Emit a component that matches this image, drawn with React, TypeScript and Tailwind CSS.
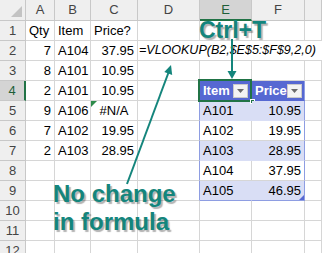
import React from 'react';

const grid = 'border-r border-b border-[#d6d6d6]';
const head = 'border-r border-b border-[#c8c8c8] bg-[#efefef] text-[#444] flex items-center justify-center';

type Row = { n: number; a?: string; b?: string; c?: string; e?: string; f?: string; band?: boolean };

const rows: Row[] = [
  { n: 1, a: 'Qty', b: 'Item', c: 'Price?' },
  { n: 2, a: '7', b: 'A104', c: '37.95' },
  { n: 3, a: '8', b: 'A101', c: '10.95' },
  { n: 4, a: '2', b: 'A101', c: '10.95' },
  { n: 5, a: '9', b: 'A106', c: '#N/A', e: 'A101', f: '10.95', band: true },
  { n: 6, a: '7', b: 'A102', c: '19.95', e: 'A102', f: '19.95' },
  { n: 7, a: '2', b: 'A103', c: '28.95', e: 'A103', f: '28.95', band: true },
  { n: 8, e: 'A104', f: '37.95' },
  { n: 9, e: 'A105', f: '46.95', band: true },
  { n: 10 },
  { n: 11 },
  { n: 12 },
];

const DropBtn = () => (
  <span className="w-[15px] h-[14px] bg-[#f3f3f3] border border-[#c9c9c9] flex items-center justify-center">
    <svg width="7" height="4" viewBox="0 0 7 4">
      <polygon points="0,0 7,0 3.5,4" fill="#6b6b6b" />
    </svg>
  </span>
);

const Cell = ({ children, right, className = '' }: { children?: React.ReactNode; right?: boolean; className?: string }) => (
  <div className={`${grid} flex items-center ${right ? 'justify-end pr-[3px]' : 'pl-[3px]'} ${className}`}>
    {children}
  </div>
);

export default function App() {
  return (
    <div className="relative w-[322px] h-[253px] overflow-hidden bg-white text-black text-[13px] font-['Liberation_Sans',Arial,sans-serif]">
      <div className="grid grid-cols-[26px_29px_36px_47px_62px_52px_53px_17px] grid-rows-[21px_repeat(12,20px)]">
        {/* column headers */}
        <div className={`${head} relative`}>
          <svg className="absolute right-[3px] bottom-[3px]" width="11" height="11" viewBox="0 0 11 11">
            <polygon points="11,0 11,11 0,11" fill="#c3c3c3" />
          </svg>
        </div>
        <div className={head}>A</div>
        <div className={head}>B</div>
        <div className={head}>C</div>
        <div className={head}>D</div>
        <div className={`${head} !bg-[#d4d4d4] !text-[#1e5e38] border-b-2 !border-b-[#217346]`}>E</div>
        <div className={head}>F</div>
        <div className={head}></div>

        {rows.map((r) => {
          const inTable = r.n >= 4 && r.n <= 9;
          const bandBg = r.band ? 'bg-[#d9def5]' : '';
          return (
            <React.Fragment key={r.n}>
              <div
                className={`${head} ${r.n === 4 ? '!bg-[#d4d4d4] !text-[#1e5e38] border-r-2 !border-r-[#217346]' : ''}`}
              >
                {r.n}
              </div>
              <Cell right={r.n !== 1}>{r.a}</Cell>
              <Cell>{r.b}</Cell>
              {r.c === '#N/A' ? (
                <div className={`${grid} relative flex items-center justify-center`}>
                  <svg className="absolute left-0 top-0" width="6" height="6" viewBox="0 0 6 6">
                    <polygon points="0,0 6,0 0,6" fill="#2e8b4a" />
                  </svg>
                  #N/A
                </div>
              ) : (
                <Cell right={r.n !== 1}>{r.c}</Cell>
              )}
              {r.n === 2 ? (
                <div className="col-span-4 border-b border-[#d6d6d6] flex items-center pl-[1px] italic text-[12.5px] whitespace-nowrap">
                  =VLOOKUP(B2,$E$5:$F$9,2,0)
                </div>
              ) : (
                <>
                  <Cell className={inTable ? '!border-r-[#8e9de2]' : ''} />
                  {r.n === 4 ? (
                    <>
                      <div className="relative bg-[#5668d2] border-r border-white border-b border-b-[#5668d2] flex items-center justify-between pl-[3px] pr-[3px] text-white font-bold">
                        Item
                        <DropBtn />
                        <div className="absolute -left-[2px] -top-[2px] w-[54px] h-[23px] border-2 border-[#217346] pointer-events-none" />
                        <div className="absolute -right-[4px] -bottom-[4px] w-[5px] h-[5px] bg-[#217346] border border-white" />
                      </div>
                      <div className="bg-[#5668d2] border-r border-[#8e9de2] border-b border-b-[#5668d2] flex items-center justify-between pl-[3px] pr-[2px] text-white font-bold">
                        Price
                        <DropBtn />
                      </div>
                    </>
                  ) : inTable ? (
                    <>
                      <div
                        className={`${bandBg} border-r ${r.band ? 'border-[#d9def5]' : 'border-[#d6d6d6]'} border-b ${r.n === 9 ? '!border-b-[#8e9de2]' : r.band ? 'border-b-[#d9def5]' : 'border-b-[#d6d6d6]'} flex items-center pl-[3px]`}
                      >
                        {r.e}
                      </div>
                      <div
                        className={`${bandBg} relative border-r border-[#8e9de2] border-b ${r.n === 9 ? 'border-b-[#8e9de2]' : r.band ? 'border-b-[#d9def5]' : 'border-b-[#d6d6d6]'} flex items-center justify-end pr-[3px]`}
                      >
                        {r.f}
                        {r.n === 9 && (
                          <svg className="absolute right-0 bottom-0" width="5" height="5" viewBox="0 0 5 5">
                            <polygon points="5,0 5,5 0,5" fill="#5668d2" />
                          </svg>
                        )}
                      </div>
                    </>
                  ) : (
                    <>
                      <Cell />
                      <Cell />
                    </>
                  )}
                  <Cell />
                </>
              )}
            </React.Fragment>
          );
        })}
      </div>

      {/* annotations */}
      <svg className="absolute left-0 top-0 pointer-events-none" width="322" height="253" viewBox="0 0 322 253">
        <g fill="#14857c" stroke="#14857c">
          <line x1="232" y1="39" x2="232" y2="72" strokeWidth="2" />
          <polygon points="227.5,71 236.5,71 232,79" stroke="none" />
          <line x1="127" y1="184" x2="168.5" y2="72.5" strokeWidth="2" />
          <polygon points="171,65 172.2,75 164.3,72" stroke="none" />
        </g>
      </svg>
      <div className="absolute left-[199px] top-[19px] leading-none text-[23px] font-bold text-[#14857c] font-['Liberation_Sans',Arial,sans-serif] [text-shadow:2px_2px_1px_rgba(0,0,0,0.3)] pointer-events-none whitespace-nowrap">
        Ctrl+T
      </div>
      <div className="absolute left-[53px] top-[180px] leading-[28px] text-[24px] font-bold text-[#14857c] font-['Liberation_Sans',Arial,sans-serif] [text-shadow:2px_2px_1px_rgba(0,0,0,0.3)] pointer-events-none whitespace-nowrap">
        No change
        <br />
        in formula
      </div>
    </div>
  );
}
